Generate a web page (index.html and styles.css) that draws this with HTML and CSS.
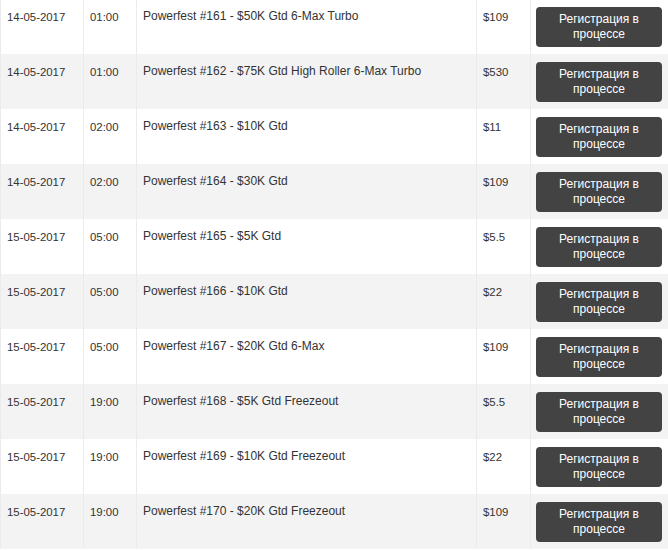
FILE: index.html
```html
<!DOCTYPE html>
<html lang="ru">
<head>
<meta charset="utf-8">
<link rel="stylesheet" href="styles.css">
</head>
<body>
<table class="schedule">
  <colgroup>
    <col class="c-date"><col class="c-time"><col class="c-name"><col class="c-price"><col class="c-act">
  </colgroup>
  <tbody>
    <tr><td class="num">14-05-2017</td><td class="num">01:00</td><td>Powerfest #161 - $50K Gtd 6-Max Turbo</td><td class="num">$109</td><td class="act"><span class="btn">Регистрация в процессе</span></td></tr>
    <tr><td class="num">14-05-2017</td><td class="num">01:00</td><td>Powerfest #162 - $75K Gtd High Roller 6-Max Turbo</td><td class="num">$530</td><td class="act"><span class="btn">Регистрация в процессе</span></td></tr>
    <tr><td class="num">14-05-2017</td><td class="num">02:00</td><td>Powerfest #163 - $10K Gtd</td><td class="num">$11</td><td class="act"><span class="btn">Регистрация в процессе</span></td></tr>
    <tr><td class="num">14-05-2017</td><td class="num">02:00</td><td>Powerfest #164 - $30K Gtd</td><td class="num">$109</td><td class="act"><span class="btn">Регистрация в процессе</span></td></tr>
    <tr><td class="num">15-05-2017</td><td class="num">05:00</td><td>Powerfest #165 - $5K Gtd</td><td class="num">$5.5</td><td class="act"><span class="btn">Регистрация в процессе</span></td></tr>
    <tr><td class="num">15-05-2017</td><td class="num">05:00</td><td>Powerfest #166 - $10K Gtd</td><td class="num">$22</td><td class="act"><span class="btn">Регистрация в процессе</span></td></tr>
    <tr><td class="num">15-05-2017</td><td class="num">05:00</td><td>Powerfest #167 - $20K Gtd 6-Max</td><td class="num">$109</td><td class="act"><span class="btn">Регистрация в процессе</span></td></tr>
    <tr><td class="num">15-05-2017</td><td class="num">19:00</td><td>Powerfest #168 - $5K Gtd Freezeout</td><td class="num">$5.5</td><td class="act"><span class="btn">Регистрация в процессе</span></td></tr>
    <tr><td class="num">15-05-2017</td><td class="num">19:00</td><td>Powerfest #169 - $10K Gtd Freezeout</td><td class="num">$22</td><td class="act"><span class="btn">Регистрация в процессе</span></td></tr>
    <tr><td class="num">15-05-2017</td><td class="num">19:00</td><td>Powerfest #170 - $20K Gtd Freezeout</td><td class="num">$109</td><td class="act"><span class="btn">Регистрация в процессе</span></td></tr>
  </tbody>
</table>
</body>
</html>
```
FILE: styles.css
```css
html, body {
  margin: 0;
  padding: 0;
  background: #ffffff;
}
body {
  font-family: "Liberation Sans", Arial, sans-serif;
  font-size: 12px;
  line-height: 15px;
  color: #333333;
}
.schedule {
  width: 668px;
  table-layout: fixed;
  border-collapse: collapse;
  margin-top: -1px;
}
.c-date { width: 83px; }
.c-time { width: 53px; }
.c-name { width: 340px; }
.c-price { width: 54px; }
.c-act { width: 138px; }
.schedule tr {
  height: 55px;
}
.schedule tr:nth-child(even) {
  background: #f3f3f3;
}
.schedule td {
  vertical-align: top;
  padding: 10px 5px 0 6px;
  border-left: 1px solid #ebebeb;
  white-space: nowrap;
}
.schedule td.num {
  font-size: 11.4px;
  padding-top: 11px;
}
.schedule td.act {
  padding: 8px 6px 0 5px;
  border-right: 1px solid #ebebeb;
}
.btn {
  display: block;
  width: 126px;
  box-sizing: border-box;
  padding: 5px 18px;
  background: #434343;
  color: #ffffff;
  border-radius: 4px;
  text-align: center;
  white-space: normal;
}
```
